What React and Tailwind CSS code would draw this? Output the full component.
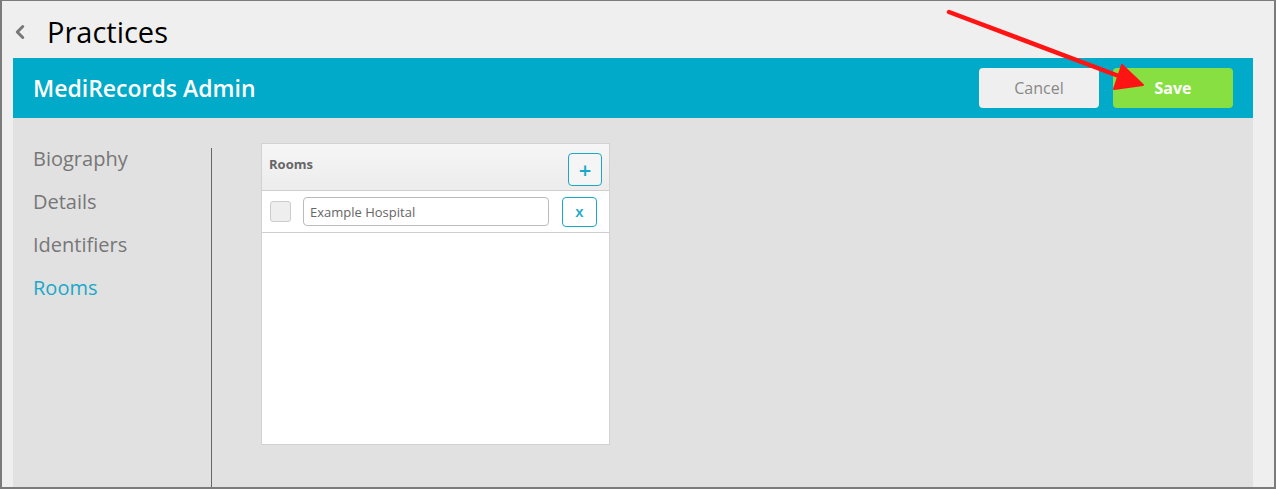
import { ChevronLeft } from "lucide-react";

const navItems = ["Biography", "Details", "Identifiers", "Rooms"];

function RedArrow() {
  // annotation arrow pointing to Save
  return (
    <svg
      className="absolute left-0 top-0 pointer-events-none"
      width="1276"
      height="489"
      viewBox="0 0 1276 489"
    >
      <line x1="947" y1="11" x2="1122" y2="77" stroke="#ff1414" strokeWidth="4.5" strokeLinecap="round" />
      <polygon points="1141,84 1120,64 1112,88" fill="#ff1414" stroke="#ff1414" strokeWidth="2" strokeLinejoin="round" />
    </svg>
  );
}

export default function App() {
  return (
    <div
      className="relative w-[1276px] h-[489px] bg-[#efefef] border-t border-l-2 border-r-2 border-b-2 border-[#7b7b7b] overflow-hidden flex flex-col"
      style={{ fontFamily: '"Open Sans", "Liberation Sans", sans-serif' }}
    >
      {/* ================= TITLE ================= */}
      <div className="h-[57px] flex items-center shrink-0 pt-[4px]">
        <ChevronLeft className="w-[22px] h-[22px] text-[#777] ml-[7px]" strokeWidth={3.2} />
        <h1 className="ml-[16px] text-[29px] leading-none text-black">Practices</h1>
      </div>

      <div className="flex-1 flex flex-col ml-[11px] mr-[21px]">
        {/* ================= HEADER ================= */}
        <div className="h-[60px] bg-[#00aac8] flex items-center justify-between pl-[20px] pr-[20px] shrink-0">
          <span className="text-white text-[23px] font-semibold">MediRecords Admin</span>
          <div className="flex gap-[14px]">
            <button className="w-[120px] h-[40px] rounded-[4px] bg-[#efefef] text-[#888] text-[16px]">
              Cancel
            </button>
            <button className="w-[120px] h-[40px] rounded-[4px] bg-[#88df41] text-white text-[16px] font-bold">
              Save
            </button>
          </div>
        </div>

        {/* ================= BODY ================= */}
        <div className="flex-1 bg-[#e1e1e1] flex">
          <div className="w-[198px] pl-[20px] pt-[27px] flex flex-col gap-[15px]">
            {navItems.map((n) => (
              <div
                key={n}
                className={`text-[20px] leading-[28px] ${n === "Rooms" ? "text-[#1aa8c9]" : "text-[#777]"}`}
              >
                {n}
              </div>
            ))}
          </div>
          <div className="mt-[30px] w-px bg-[#666]"></div>

          {/* ROOMS CARD */}
          <div className="ml-[49px] mt-[25px] w-[349px] h-[302px] bg-white border border-[#d2d2d2] flex flex-col">
            <div className="h-[47px] bg-gradient-to-b from-[#f6f6f6] to-[#ececec] border-b border-[#cfcfcf] flex items-center justify-between pl-[7px] pr-[7px]">
              <span className="text-[13px] font-bold text-[#666] -mt-[4px]">Rooms</span>
              <button className="w-[34px] h-[33px] mt-[4px] rounded-[4px] border border-[#1aa8c9] bg-[#f5f5f5] text-[#1aa8c9] text-[22px] font-semibold leading-none flex items-center justify-center">
                +
              </button>
            </div>
            <div className="h-[42px] border-b border-[#cfcfcf] flex items-center pl-[8px] pr-[12px]">
              <div className="w-[21px] h-[21px] rounded-[3px] bg-[#eee] border border-[#ccc]"></div>
              <input
                readOnly
                value="Example Hospital"
                className="ml-[12px] w-[246px] h-[29px] rounded-[4px] border border-[#bbb] bg-white px-[6px] text-[13px] text-[#666] outline-none"
              />
              <button className="ml-auto w-[35px] h-[30px] rounded-[4px] border border-[#1aa8c9] bg-white text-[#1aa8c9] text-[15px] font-semibold leading-none flex items-center justify-center">
                x
              </button>
            </div>
          </div>
        </div>
      </div>

      <RedArrow />
    </div>
  );
}
